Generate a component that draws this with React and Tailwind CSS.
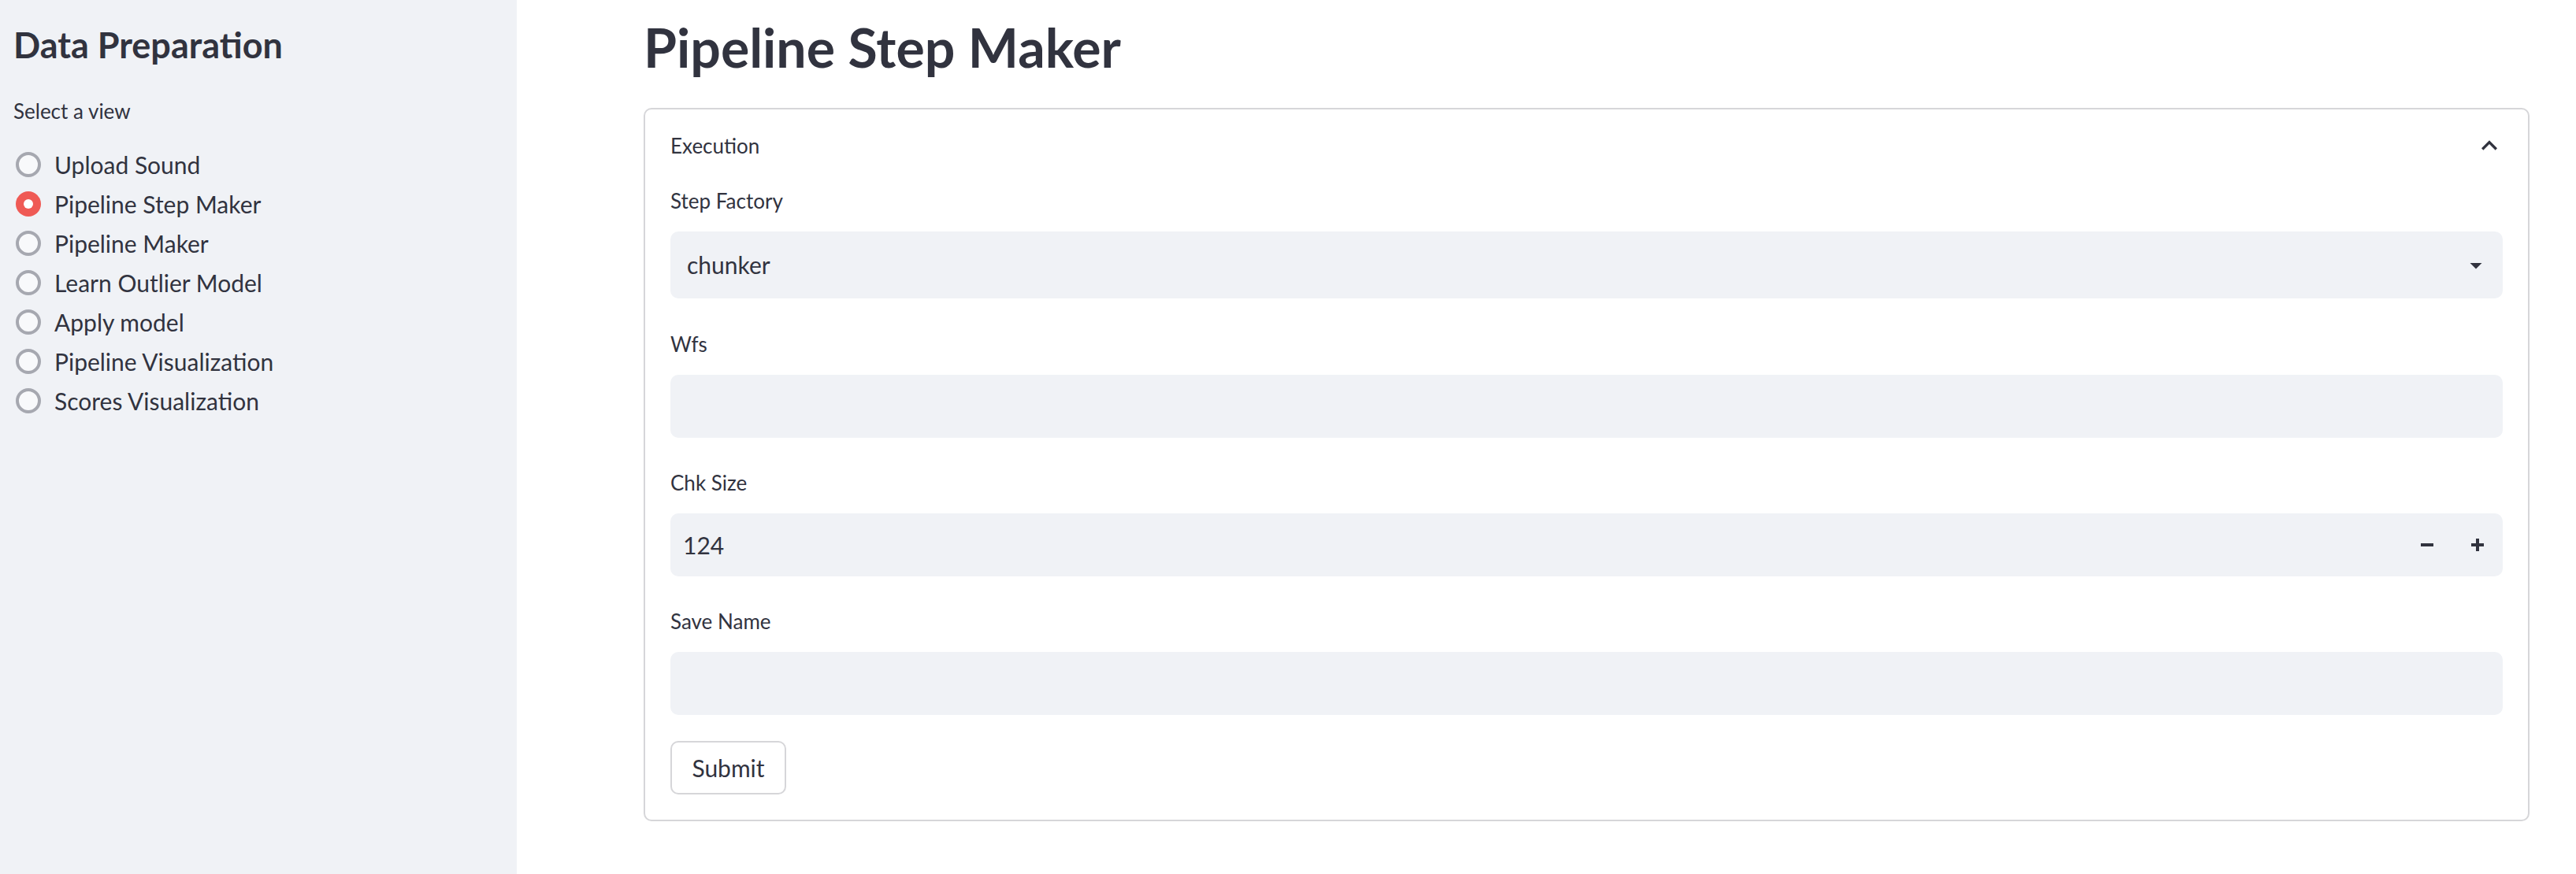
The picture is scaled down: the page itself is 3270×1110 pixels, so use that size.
import React from 'react';

const views = [
  'Upload Sound',
  'Pipeline Step Maker',
  'Pipeline Maker',
  'Learn Outlier Model',
  'Apply model',
  'Pipeline Visualization',
  'Scores Visualization',
];

const Radio = ({ checked }) =>
  checked ? (
    <span className="flex size-[32px] items-center justify-center rounded-full bg-[#ef5a55]">
      <span className="size-[12px] rounded-full bg-white" />
    </span>
  ) : (
    <span className="size-[32px] rounded-full border-4 border-[#a6a8b0] bg-[#f8f9fb]" />
  );

const Field = ({ label, className = '', children }) => (
  <div className={className}>
    <div className="mb-[23px] text-[26px] leading-[31px]">{label}</div>
    {children}
  </div>
);

export default function App() {
  return (
    <div className="flex h-[1110px] w-[3270px] font-['Lato',sans-serif] text-[#31333f]">
      {/* sidebar */}
      <aside className="w-[656px] shrink-0 bg-[#f0f2f6] pl-[17px] pt-[30px]">
        <h2 className="text-[45px] font-bold leading-[54px]">Data Preparation</h2>
        <p className="mt-[42px] text-[26px] leading-[31px]">Select a view</p>
        <ul className="mt-[27px] flex flex-col">
          {views.map((v) => (
            <li key={v} className="flex h-[50px] items-center pl-[3px]">
              <Radio checked={v === 'Pipeline Step Maker'} />
              <span className="ml-[17px] text-[30px] leading-[36px]">{v}</span>
            </li>
          ))}
        </ul>
      </aside>

      {/* main */}
      <main className="flex-1 bg-white pl-[161px] pr-[59px] pt-[19px]">
        <h1 className="text-[68px] font-bold leading-[82px]">Pipeline Step Maker</h1>

        <section className="mt-[36px] rounded-[10px] border-2 border-[#d6d6d9]">
          <div className="flex h-[92px] items-center justify-between pl-[32px] pr-[29px]">
            <span className="text-[26px] leading-[31px]">Execution</span>
            <svg width="40" height="40" viewBox="0 0 24 24" fill="#31333f">
              <path d="M12 8l-6 6 1.41 1.41L12 10.83l4.59 4.58L18 14z" />
            </svg>
          </div>

          <div className="px-[32px] pb-[32px] pt-[9px]">
            <Field label="Step Factory">
              <div className="flex h-[85px] items-center justify-between rounded-[10px] bg-[#f0f2f6] pl-[21px] pr-[16px]">
                <span className="text-[30px]">chunker</span>
                <svg width="36" height="36" viewBox="0 0 24 24" fill="#31333f">
                  <path d="M7 10l5 5 5-5z" />
                </svg>
              </div>
            </Field>

            <Field label="Wfs" className="mt-[43px]">
              <div className="h-[80px] rounded-[10px] bg-[#f0f2f6]" />
            </Field>

            <Field label="Chk Size" className="mt-[42px]">
              <div className="flex h-[80px] items-center rounded-[10px] bg-[#f0f2f6]">
                <span className="flex-1 pl-[16px] text-[30px]">124</span>
                <button className="flex h-full w-[64px] items-center justify-center">
                  <svg width="16" height="4" viewBox="0 0 16 4">
                    <rect width="16" height="4" fill="#31333f" />
                  </svg>
                </button>
                <button className="flex h-full w-[64px] items-center justify-center">
                  <svg width="16" height="16" viewBox="0 0 16 16" fill="#31333f">
                    <rect y="6" width="16" height="4" />
                    <rect x="6" width="4" height="16" />
                  </svg>
                </button>
              </div>
            </Field>

            <Field label="Save Name" className="mt-[42px]">
              <div className="h-[80px] rounded-[10px] bg-[#f0f2f6]" />
            </Field>

            <button className="mt-[33px] h-[68px] w-[147px] rounded-[10px] border-2 border-[#d6d6d9] bg-white text-[30px]">
              Submit
            </button>
          </div>
        </section>
      </main>
    </div>
  );
}
